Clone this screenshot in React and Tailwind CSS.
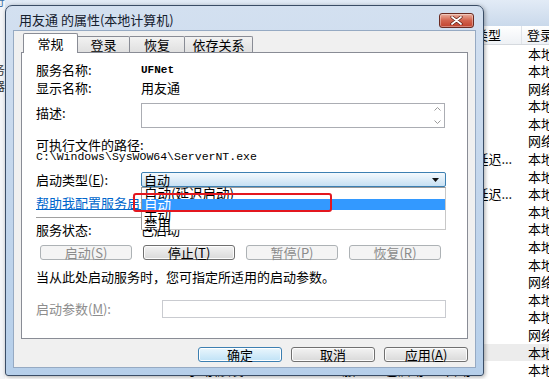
import React from "react";

const CJK = "font-[family-name:'Noto_Sans_CJK_SC','Noto_Sans',sans-serif]";
const MONO = "font-[family-name:'Liberation_Mono',monospace]";

const rows = [
  { s: "自动", l: "本地服务" },
  { s: "手动", l: "本地系统" },
  { s: "自动", l: "网络服务" },
  { s: "手动", l: "本地系统" },
  { s: "手动", l: "本地服务" },
  { s: "自动", l: "网络服务" },
  { s: "自动(延迟...", l: "本地系统" },
  { s: "手动", l: "本地系统" },
  { s: "自动(延迟...", l: "本地服务" },
  { s: "手动", l: "本地系统" },
  { s: "手动", l: "本地服务" },
  { s: "自动", l: "本地系统" },
  { s: "手动", l: "本地系统" },
  { s: "手动", l: "网络服务" },
  { s: "自动", l: "本地系统" },
  { s: "手动", l: "本地服务" },
  { s: "手动", l: "网络服务" },
  { s: "自动", l: "本地系统", sel: true },
  { s: "自动", l: "本地系统", d: "手动(触发", c: "3服...", st: "已启动" },
];

function Btn({ children, disabled, def, w = "w-[92px]" }) {
  const base = `${w} h-[15px] flex items-center justify-center rounded-[3px] border text-[13px] leading-[15px]`;
  if (disabled)
    return <div className={`${base} border-[#adb2b5] bg-[#f4f4f4] text-[#8b8b8b]`}>{children}</div>;
  if (def)
    return (
      <div className={`${base} border-[#3c7fb1] bg-gradient-to-b from-[#eaf6fd] to-[#bfe2f6] text-black shadow-[inset_0_0_0_1px_#ffffff]`}>
        {children}
      </div>
    );
  return (
    <div className={`${base} border-[#707070] bg-gradient-to-b from-[#f3f3f3] to-[#d9d9d9] text-black shadow-[inset_0_0_0_1px_#fcfcfc]`}>
      {children}
    </div>
  );
}

export default function App() {
  return (
    <div className={`relative w-[549px] h-[379px] overflow-hidden bg-white text-[13px] text-black ${CJK}`}>
      {/* background: service list window */}
      <div className="flex h-full">
        <div className="w-[5px] flex flex-col bg-[#f3f5f8] text-[12px] leading-[14px] text-[#333]">
          <div className="h-[10px] flex justify-end overflow-hidden text-[#3b6ea5]">
            <span className="whitespace-nowrap -mt-[6px]">符</span>
          </div>
          <div className="h-[53px]" />
          <div className="h-[16px] flex justify-end overflow-hidden">
            <span className="whitespace-nowrap">服务</span>
          </div>
          <div className="h-[14px] flex justify-end overflow-hidden">
            <span className="whitespace-nowrap">器</span>
          </div>
        </div>
        <div className="flex-1 flex flex-col">
          <div className="h-[28px] bg-gradient-to-b from-[#e2ebf6] to-[#cad9eb]" />
          <div className="h-[21px] flex items-center bg-gradient-to-b from-white to-[#eef1f5] border-b border-[#d5d9de] text-[13px] leading-[14px]">
            <div className="w-[175px]" />
            <div className="w-[150px]" />
            <div className="w-[50px]" />
            <div className="w-[60px]" />
            <div className="w-[82px] pl-[9px] h-full flex items-center border-r border-[#dfe3e8] whitespace-nowrap overflow-hidden">启动类型</div>
            <div className="flex-1 pl-[5px] whitespace-nowrap overflow-hidden">登录为</div>
          </div>
          {rows.map((r, i) => (
            <div
              key={i}
              className={`h-[17.6px] shrink-0 flex items-center text-[13px] leading-[14px] whitespace-nowrap ${r.sel ? "bg-[#ececec]" : ""}`}
            >
              <div className="w-[175px] overflow-hidden" />
              <div className="w-[150px] pl-[7px] overflow-hidden">{r.d || ""}</div>
              <div className="w-[50px] pl-[5px] overflow-hidden">{r.c || ""}</div>
              <div className="w-[60px] pl-[5px] overflow-hidden">{r.st || ""}</div>
              <div className="w-[83px] pl-[5px] overflow-hidden">{r.s}</div>
              <div className="flex-1 pl-[5px] overflow-hidden">{r.l}</div>
            </div>
          ))}
        </div>
      </div>

      {/* dialog window */}
      <div className="absolute left-[5px] top-[5px] w-[479px] h-[371px] rounded-t-[7px] rounded-b-[3px] border border-[#3a4d66] bg-gradient-to-b from-[#d3e0f0] via-[#c3d6ec] to-[#b6cfea] flex flex-col shadow-[1px_1px_4px_rgba(0,0,0,0.35)]">
        <div className="h-[24px] shrink-0 flex items-start justify-between pl-[13px] pr-[9px]">
          <span className="mt-[7px] leading-[14px] text-[13px] text-[#15202e] whitespace-nowrap">用友通 的属性(本地计算机)</span>
          <div className="mt-[7px] w-[35px] h-[15px] rounded-[3px] border border-[#6b2b22] bg-gradient-to-b from-[#eab0a0] via-[#d2624d] to-[#c1412c] flex items-center justify-center shadow-[inset_0_0_0_1px_rgba(255,255,255,0.35)]">
            <svg width="13" height="9" viewBox="0 0 13 9">
              <path d="M2 1 L11 8 M11 1 L2 8" stroke="#5a1a12" strokeWidth="3.2" strokeLinecap="round" />
              <path d="M2 1 L11 8 M11 1 L2 8" stroke="#ffffff" strokeWidth="1.8" strokeLinecap="round" />
            </svg>
          </div>
        </div>

        <div className="mx-[7px] mb-[7px] flex-1 border border-[#96aac3] bg-[#f0f0f0] flex flex-col">
          {/* tabs */}
          <div className="h-[21px] shrink-0 flex items-end pl-[9px] text-[13px] leading-[14px]">
            <div className="relative z-10 w-[55px] h-[20px] -mb-px bg-white border border-b-0 border-[#898c95] rounded-t-[2px] flex items-center justify-center">
              常规
            </div>
            <div className="w-[52px] h-[16px] border border-b-0 border-[#898c95] border-l-0 rounded-tr-[2px] bg-gradient-to-b from-[#f2f2f2] to-[#e0e0e0] flex items-center justify-center">
              登录
            </div>
            <div className="w-[55px] h-[16px] border border-b-0 border-[#898c95] border-l-0 rounded-tr-[2px] bg-gradient-to-b from-[#f2f2f2] to-[#e0e0e0] flex items-center justify-center">
              恢复
            </div>
            <div className="w-[68px] h-[16px] border border-b-0 border-[#898c95] border-l-0 rounded-tr-[2px] bg-gradient-to-b from-[#f2f2f2] to-[#e0e0e0] flex items-center justify-center">
              依存关系
            </div>
          </div>

          {/* tab panel */}
          <div className="mx-[7px] h-[287px] shrink-0 bg-white border border-[#898c95] flex flex-col pl-[14px] text-[13px] leading-[14px]">
            <div className="mt-[9px] h-[16px] flex items-center">
              <div className="w-[105px]">服务名称:</div>
              <div className={`${MONO} font-bold text-[11px]`}>UFNet</div>
            </div>
            <div className="mt-[2px] h-[16px] flex items-center">
              <div className="w-[105px]">显示名称:</div>
              <div>用友通</div>
            </div>
            <div className="mt-[7px] h-[25px] flex items-start">
              <div className="w-[105px] mt-[3px]">描述:</div>
              <div className="w-[304px] h-[25px] border border-[#abadb3] bg-white flex justify-end">
                <div className="w-[13px] h-full flex flex-col items-center justify-between py-[3px]">
                  <svg width="7" height="4" viewBox="0 0 7 4"><path d="M0.5 3.5 L3.5 0.5 L6.5 3.5" fill="none" stroke="#9a9a9a" /></svg>
                  <svg width="7" height="4" viewBox="0 0 7 4"><path d="M0.5 0.5 L3.5 3.5 L6.5 0.5" fill="none" stroke="#9a9a9a" /></svg>
                </div>
              </div>
            </div>
            <div className="mt-[10px] h-[13px] flex items-center">可执行文件的路径:</div>
            <div className={`h-[12px] flex items-center ${MONO} text-[11.5px] leading-[12px] whitespace-nowrap`}>
              {"C:\\Windows\\SysWOW64\\ServerNT.exe"}
            </div>
            <div className="mt-[9px] h-[15px] flex items-center">
              <div className="w-[105px] whitespace-nowrap">启动类型(<u>E</u>):</div>
              <div className="w-[305px] h-[15px] rounded-[2px] border border-[#3c7fb1] bg-gradient-to-b from-[#f4f9fd] to-[#c6e0f3] flex items-center justify-between pl-[2px] pr-[6px] leading-[13px]">
                <span>自动</span>
                <svg width="7" height="4" viewBox="0 0 7 4"><path d="M0 0 L7 0 L3.5 4 Z" fill="#111" /></svg>
              </div>
            </div>
            <div className="mt-[9px] h-[14px] flex items-center whitespace-nowrap text-[#0066cc] underline">
              帮助我配置服务启动选项。
            </div>
            <div className="mt-[7px] w-[410px] h-px bg-[#a0a0a0]" />
            <div className="mt-[5px] h-[14px] flex items-center">
              <div className="w-[105px]">服务状态:</div>
              <div>已启动</div>
            </div>
            <div className="mt-[8px] ml-[4px] h-[15px] flex gap-[11px]">
              <Btn disabled>启动(<u>S</u>)</Btn>
              <Btn>停止(<u>T</u>)</Btn>
              <Btn disabled>暂停(<u>P</u>)</Btn>
              <Btn disabled>恢复(<u>R</u>)</Btn>
            </div>
            <div className="mt-[10px] h-[14px] flex items-center whitespace-nowrap">
              当从此处启动服务时，您可指定所适用的启动参数。
            </div>
            <div className="mt-[16px] h-[18px] flex items-center">
              <div className="w-[126px] text-[#8d8d8d] whitespace-nowrap">启动参数(<u>M</u>):</div>
              <div className="w-[284px] h-[18px] border border-[#c9cbd0] bg-white" />
            </div>
          </div>

          {/* bottom buttons */}
          <div className="mt-[8px] h-[15px] flex justify-end gap-[9px] pr-[7px]">
            <Btn def w="w-[84px]">确定</Btn>
            <Btn w="w-[84px]">取消</Btn>
            <Btn w="w-[84px]">应用(<u>A</u>)</Btn>
          </div>
        </div>
      </div>

      {/* open dropdown list */}
      <div className="absolute left-[141px] top-[187px] w-[305px] h-[43px] bg-white border border-[#9a9a9a] border-r-[#c8c8c8] border-b-[#c8c8c8] flex flex-col text-[13.5px] whitespace-nowrap z-20">
        <div className="h-[11px] pl-[2px] leading-[11px] flex items-center">自动(延迟启动)</div>
        <div className="relative z-10 h-[11px] pl-[2px] leading-[11px] bg-[#3399ff] text-white flex items-center">自动</div>
        <div className="h-[9px] pl-[2px] leading-[9px] flex items-center">手动</div>
        <div className="h-[10px] pl-[2px] leading-[10px] flex items-center">禁用</div>
      </div>

      {/* red annotation box */}
      <div className="absolute left-[133px] top-[193px] w-[199px] h-[19px] border-2 border-[#e3171f] rounded-[3px] z-30" />
    </div>
  );
}
